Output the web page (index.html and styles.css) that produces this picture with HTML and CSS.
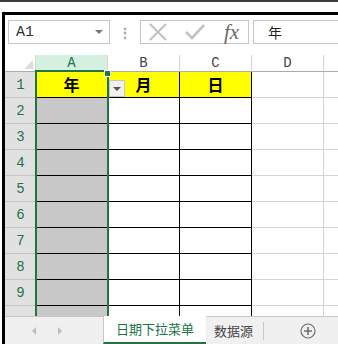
FILE: index.html
```html
<!DOCTYPE html>
<html lang="zh">
<head>
    <meta charset="UTF-8">
    <title>日期下拉菜单</title>
    <link rel="stylesheet" href="styles.css">
</head>
<body>
    <div class="topbar"></div>

    <div class="window">
        <div class="formula-bar">
            <div class="namebox">
                <span class="ref">A1</span>
                <span class="caret"></span>
            </div>
            <div class="dots">⋮</div>
            <div class="fx-box">
                <svg class="ico" width="20" height="20" viewBox="0 0 20 20">
                    <path d="M2 2 L18 18 M18 2 L2 18" stroke="#c3c3c3" stroke-width="2.2" fill="none"/>
                </svg>
                <svg class="ico" width="22" height="20" viewBox="0 0 22 20">
                    <path d="M2 10 L8 16 L20 3" stroke="#c3c3c3" stroke-width="2.6" fill="none"/>
                </svg>
                <span class="fx">fx</span>
            </div>
            <div class="input">年</div>
        </div>

        <div class="sheet">
            <div class="grid">
                <div class="corner"><span class="tri"></span></div>
                <div class="colhead sel">A</div>
                <div class="colhead">B</div>
                <div class="colhead">C</div>
                <div class="colhead">D</div>
                <div class="colhead last"></div>

                <div class="rowhead">1</div>
                <div class="cell yellow bold">年</div>
                <div class="cell yellow bold">月</div>
                <div class="cell yellow bold">日</div>
                <div class="cell plain"></div>
                <div class="cell plain"></div>

                <div class="rowhead">2</div>
                <div class="cell grey"></div><div class="cell"></div><div class="cell"></div><div class="cell plain"></div><div class="cell plain"></div>
                <div class="rowhead">3</div>
                <div class="cell grey"></div><div class="cell"></div><div class="cell"></div><div class="cell plain"></div><div class="cell plain"></div>
                <div class="rowhead">4</div>
                <div class="cell grey"></div><div class="cell"></div><div class="cell"></div><div class="cell plain"></div><div class="cell plain"></div>
                <div class="rowhead">5</div>
                <div class="cell grey"></div><div class="cell"></div><div class="cell"></div><div class="cell plain"></div><div class="cell plain"></div>
                <div class="rowhead">6</div>
                <div class="cell grey"></div><div class="cell"></div><div class="cell"></div><div class="cell plain"></div><div class="cell plain"></div>
                <div class="rowhead">7</div>
                <div class="cell grey"></div><div class="cell"></div><div class="cell"></div><div class="cell plain"></div><div class="cell plain"></div>
                <div class="rowhead">8</div>
                <div class="cell grey"></div><div class="cell"></div><div class="cell"></div><div class="cell plain"></div><div class="cell plain"></div>
                <div class="rowhead">9</div>
                <div class="cell grey"></div><div class="cell"></div><div class="cell"></div><div class="cell plain"></div><div class="cell plain"></div>
                <div class="rowhead"></div>
                <div class="cell grey"></div><div class="cell"></div><div class="cell"></div><div class="cell plain"></div><div class="cell plain"></div>
            </div>

            <div class="selection"><span class="handle"></span></div>
            <div class="dropdown"><span class="caret"></span></div>
        </div>

        <div class="tabs">
            <div class="nav">
                <span class="arrow left"></span>
                <span class="arrow right"></span>
            </div>
            <div class="tab active">日期下拉菜单</div>
            <div class="tab">数据源</div>
            <div class="add">
                <svg width="16" height="16" viewBox="0 0 16 16">
                    <circle cx="8" cy="8" r="7" stroke="#6e6e6e" stroke-width="1.2" fill="none"/>
                    <path d="M8 4 V12 M4 8 H12" stroke="#6e6e6e" stroke-width="1.6"/>
                </svg>
            </div>
        </div>
    </div>
</body>
</html>
```

FILE: styles.css
```css
body {
    margin: 0;
    background: #fff;
    font-family: "Noto Sans CJK SC", "Noto Sans", sans-serif;
    width: 338px;
    height: 344px;
    overflow: hidden;
}
.topbar {
    height: 10px;
    border-top: 2px solid #3c3c3c;
}
.window {
    margin-left: 2px;
    border-top: 3px solid #000;
    border-left: 3px solid #000;
    height: 329px;
    display: flex;
    flex-direction: column;
    overflow: hidden;
}

/* formula bar */
.formula-bar {
    height: 40px;
    flex: none;
    display: flex;
    align-items: flex-start;
    padding: 5px 0 0 3px;
    box-sizing: border-box;
}
.namebox {
    width: 102px;
    height: 24px;
    box-sizing: border-box;
    border: 1px solid #c6c6c6;
    display: flex;
    align-items: center;
    justify-content: space-between;
    padding: 0 6px 0 7px;
}
.ref {
    font-family: "Liberation Mono", monospace;
    font-size: 15px;
    color: #333;
}
.caret {
    width: 0;
    height: 0;
    border-left: 4px solid transparent;
    border-right: 4px solid transparent;
    border-top: 4px solid #777;
}
.dots {
    width: 30px;
    text-align: center;
    color: #a0a0a0;
    font-size: 14px;
    line-height: 24px;
    font-weight: bold;
}
.fx-box {
    width: 109px;
    height: 24px;
    box-sizing: border-box;
    border: 1px solid #c6c6c6;
    display: flex;
    align-items: center;
    gap: 16px;
    padding-left: 7px;
}
.fx {
    font-family: "Liberation Serif", serif;
    font-style: italic;
    font-size: 21px;
    color: #6a6a6a;
    line-height: 20px;
    margin-left: 2px;
}
.input {
    flex: 1;
    height: 24px;
    margin-left: 4px;
    box-sizing: border-box;
    border: 1px solid #c6c6c6;
    border-right: none;
    padding-left: 14px;
    font-size: 14px;
    line-height: 22px;
    color: #222;
}

/* sheet grid */
.sheet {
    position: relative;
    flex: 1;
    overflow: hidden;
}
.grid {
    display: grid;
    grid-template-columns: 31px 72px 72px 72px 72px 20px;
    grid-template-rows: 17px repeat(10, 26px);
}
.grid > div {
    box-sizing: border-box;
}
.corner {
    position: relative;
    border-right: 1px solid #d4d4d4;
    border-bottom: 1px solid #ababab;
}
.tri {
    position: absolute;
    right: 2px;
    bottom: 2px;
    width: 0;
    height: 0;
    border-left: 9px solid transparent;
    border-bottom: 9px solid #dcdcdc;
}
.colhead {
    border-right: 1px solid #d4d4d4;
    border-bottom: 1px solid #ababab;
    font-family: "Liberation Mono", monospace;
    font-size: 14px;
    line-height: 16px;
    text-align: center;
    color: #444;
}
.colhead.sel {
    background: #d3f0e0;
    color: #217346;
}
.colhead.last {
    border-right: none;
}
.rowhead {
    background: #e1e1e1;
    border-bottom: 1px solid #c4c4c4;
    font-family: "Liberation Mono", monospace;
    font-size: 14px;
    line-height: 26px;
    text-align: center;
    color: #217346;
}
.cell {
    border-right: 1px solid #000;
    border-bottom: 1px solid #000;
    text-align: center;
    font-size: 16px;
    line-height: 25px;
}
.cell.plain {
    border-right: 1px solid #d4d4d4;
    border-bottom: 1px solid #d4d4d4;
}
.yellow {
    background: #ffff00;
}
.bold {
    font-weight: bold;
}
.grey {
    background: #c8c8c8;
}

/* overlays */
.selection {
    position: absolute;
    left: 30px;
    top: 15px;
    width: 74px;
    height: 300px;
    border: 2px solid #217346;
    box-sizing: border-box;
}
.handle {
    position: absolute;
    right: -4px;
    top: -2px;
    width: 5px;
    height: 5px;
    background: #217346;
    border: 1px solid #fff;
}
.dropdown {
    position: absolute;
    left: 104px;
    top: 25px;
    width: 16px;
    height: 17px;
    box-sizing: border-box;
    background: #f0f0f0;
    border: 1px solid #c6c6c6;
    display: flex;
    align-items: center;
    justify-content: center;
}
.dropdown .caret {
    border-top-color: #555;
}

/* sheet tabs */
.tabs {
    height: 28px;
    flex: none;
    box-sizing: border-box;
    border-top: 1px solid #c6c6c6;
    background: #f0f0f0;
    display: flex;
    align-items: stretch;
}
.nav {
    flex: none;
    width: 98px;
    display: flex;
    align-items: center;
    gap: 22px;
    padding-left: 27px;
    box-sizing: border-box;
}
.arrow {
    width: 0;
    height: 0;
    border-top: 4px solid transparent;
    border-bottom: 4px solid transparent;
}
.arrow.left {
    border-right: 4px solid #bdbdbd;
}
.arrow.right {
    border-left: 4px solid #bdbdbd;
}
.tab {
    flex: none;
    white-space: nowrap;
    font-size: 13px;
    color: #444;
}
.tab.active {
    width: 103px;
    padding-left: 12px;
    box-sizing: border-box;
    background: #fff;
    color: #217346;
    border-left: 1px solid #c6c6c6;
    border-bottom: 2px solid #217346;
    margin-top: -1px;
    line-height: 26px;
}
.tab:not(.active) {
    border-right: 1px solid #c6c6c6;
    margin: 5px 0 4px;
    line-height: 16px;
    display: flex;
    align-items: center;
    padding: 0 10px 0 8px;
}
.add {
    flex: 1;
    padding-left: 14px;
    display: flex;
    align-items: center;
    justify-content: center;
}
```
